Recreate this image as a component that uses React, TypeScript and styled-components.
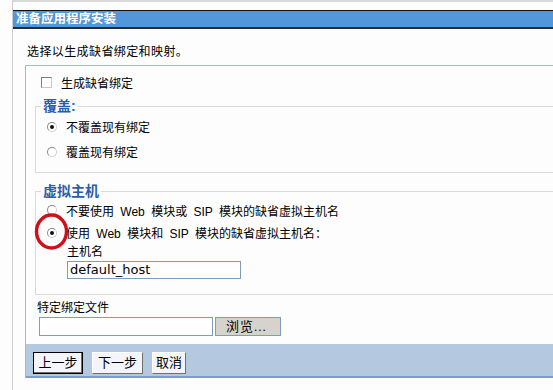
import styled, { createGlobalStyle } from 'styled-components';

const GlobalStyle = createGlobalStyle`
  html, body {
    margin: 0;
    padding: 0;
    background: #fdfdfd;
    overflow: hidden;
  }
  body {
    font-family: "Liberation Sans", "Noto Sans CJK SC", sans-serif;
    font-size: 12px;
    color: #000;
  }
`;

const Frame = styled.div`
  margin-left: 12px;
  min-height: 390px;
  border-top: 2px solid #d9d9d9;
  border-left: 1px solid #cdcdcd;
  padding-top: 8px;
  box-sizing: border-box;
`;

const TitleBar = styled.div`
  height: 16px;
  line-height: 16px;
  background: #5297d7;
  border-top: 1px solid #111;
  border-bottom: 2px solid #2d2d2d;
  color: #fff;
  font-weight: bold;
  font-size: 12.5px;
  padding-left: 3px;
  white-space: nowrap;
`;

const Intro = styled.div`
  padding: 16px 0 0 14px;
  line-height: 15px;
  letter-spacing: 0.4px;
`;

const Box = styled.div`
  margin: 5px 0 0 12px;
  border-top: 1px solid #a4b6d0;
  border-left: 1px solid #a4b6d0;
`;

const Row = styled.label<{ $indent: number; $height: number }>`
  display: flex;
  align-items: center;
  gap: 9px;
  height: ${({ $height }) => $height}px;
  padding-left: ${({ $indent }) => $indent}px;
  white-space: nowrap;
`;

const Check = styled.span`
  width: 9px;
  height: 9px;
  border: 1px solid #7c7c7c;
  border-right-color: #c8c8c8;
  border-bottom-color: #c8c8c8;
  background: #fff;
  flex: none;
`;

const RadioWrap = styled.span`
  position: relative;
  display: inline-flex;
  flex: none;
`;

const Radio = styled.span<{ $on?: boolean }>`
  width: 8px;
  height: 8px;
  border-radius: 50%;
  border: 1px solid #8a8a8a;
  border-right-color: #d0d0d0;
  border-bottom-color: #d0d0d0;
  background: #fff;
  display: flex;
  align-items: center;
  justify-content: center;

  &::after {
    content: '';
    width: 4px;
    height: 4px;
    border-radius: 50%;
    background: ${({ $on }) => ($on ? '#111' : 'transparent')};
  }
`;

const Ring = styled.svg`
  position: absolute;
  left: -14px;
  top: -16px;
  pointer-events: none;
`;

const Group = styled.fieldset<{ $top: number; $bottom: number }>`
  margin: ${({ $top }) => $top}px 0 0 9px;
  padding: 0 0 ${({ $bottom }) => $bottom}px 0;
  border: 1px solid #dadada;
  border-right: none;
  min-width: 0;
`;

const Legend = styled.legend`
  margin-left: 5px;
  padding: 0 2px;
  color: #2b5ea8;
  font-weight: bold;
  font-size: 14px;
  line-height: 16px;
`;

const Spaced = styled.span`
  word-spacing: 3px;
`;

const HostBlock = styled.div`
  padding: 1px 0 0 31px;
`;

const FieldLabel = styled.div`
  line-height: 14px;
  margin-bottom: 2px;
`;

const TextInput = styled.div<{ $width: number }>`
  width: ${({ $width }) => $width}px;
  height: 18px;
  box-sizing: border-box;
  border: 1px solid #7f9db9;
  background: #fff;
  font-family: "DejaVu Sans", sans-serif;
  font-size: 13px;
  line-height: 16px;
  padding-left: 2px;
  color: #000;
`;

const FileBlock = styled.div`
  padding: 6px 0 0 11px;
`;

const FileRow = styled.div`
  display: flex;
  gap: 2px;
  padding-left: 2px;
`;

const Browse = styled.div`
  width: 66px;
  height: 19px;
  box-sizing: border-box;
  border: 1px solid #7f9db9;
  background: #d6d3cc;
  font-family: "Liberation Serif", "Noto Sans CJK SC", serif;
  font-size: 13px;
  line-height: 17px;
  padding-left: 10px;
  letter-spacing: 1px;
`;

const Footer = styled.div`
  margin-top: 8px;
  height: 34px;
  background: #b4c8e0;
  border-bottom: 2px solid #7e9bcf;
  display: flex;
  align-items: flex-start;
  gap: 9px;
  padding: 8px 0 0 7px;
  box-sizing: border-box;
`;

const Button = styled.div<{ $width: number; $default?: boolean }>`
  width: ${({ $width }) => $width}px;
  height: 22px;
  box-sizing: border-box;
  background: #f3f5fb;
  border: 1px solid;
  border-color: ${({ $default }) =>
    $default ? '#000' : '#ffffff #6f6f6f #6f6f6f #ffffff'};
  box-shadow: ${({ $default }) => ($default ? 'inset -1px -1px 0 #6f6f6f' : 'none')};
  text-align: center;
  line-height: 20px;
  font-size: 13px;
`;

export default function App() {
  return (
    <>
      <GlobalStyle />
      <Frame>
        <TitleBar>准备应用程序安装</TitleBar>
        <Intro>选择以生成缺省绑定和映射。</Intro>
        <Box>
          <Row $indent={15} $height={16} style={{ marginTop: 8 }}>
            <Check />
            生成缺省绑定
          </Row>

          <Group $top={8} $bottom={8}>
            <Legend>覆盖:</Legend>
            <Row $indent={11} $height={25}>
              <RadioWrap>
                <Radio $on />
              </RadioWrap>
              不覆盖现有绑定
            </Row>
            <Row $indent={11} $height={25}>
              <RadioWrap>
                <Radio />
              </RadioWrap>
              覆盖现有绑定
            </Row>
          </Group>

          <Group $top={10} $bottom={15}>
            <Legend>虚拟主机</Legend>
            <Row $indent={11} $height={22}>
              <RadioWrap>
                <Radio />
              </RadioWrap>
              <Spaced>不要使用 Web 模块或 SIP 模块的缺省虚拟主机名</Spaced>
            </Row>
            <Row $indent={11} $height={23}>
              <RadioWrap>
                <Radio $on />
                <Ring width="38" height="40" viewBox="0 0 38 40">
                  <ellipse cx="18.5" cy="19.5" rx="15" ry="16.5" fill="none" stroke="#cc111b" strokeWidth="3.4" />
                </Ring>
              </RadioWrap>
              <Spaced>使用 Web 模块和 SIP 模块的缺省虚拟主机名：</Spaced>
            </Row>
            <HostBlock>
              <FieldLabel>主机名</FieldLabel>
              <TextInput $width={174}>default_host</TextInput>
            </HostBlock>
          </Group>

          <FileBlock>
            <FieldLabel>特定绑定文件</FieldLabel>
            <FileRow>
              <TextInput $width={174} style={{ height: 19 }} />
              <Browse>浏览...</Browse>
            </FileRow>
          </FileBlock>

          <Footer>
            <Button $width={50} $default>上一步</Button>
            <Button $width={51}>下一步</Button>
            <Button $width={34}>取消</Button>
          </Footer>
        </Box>
      </Frame>
    </>
  );
}
